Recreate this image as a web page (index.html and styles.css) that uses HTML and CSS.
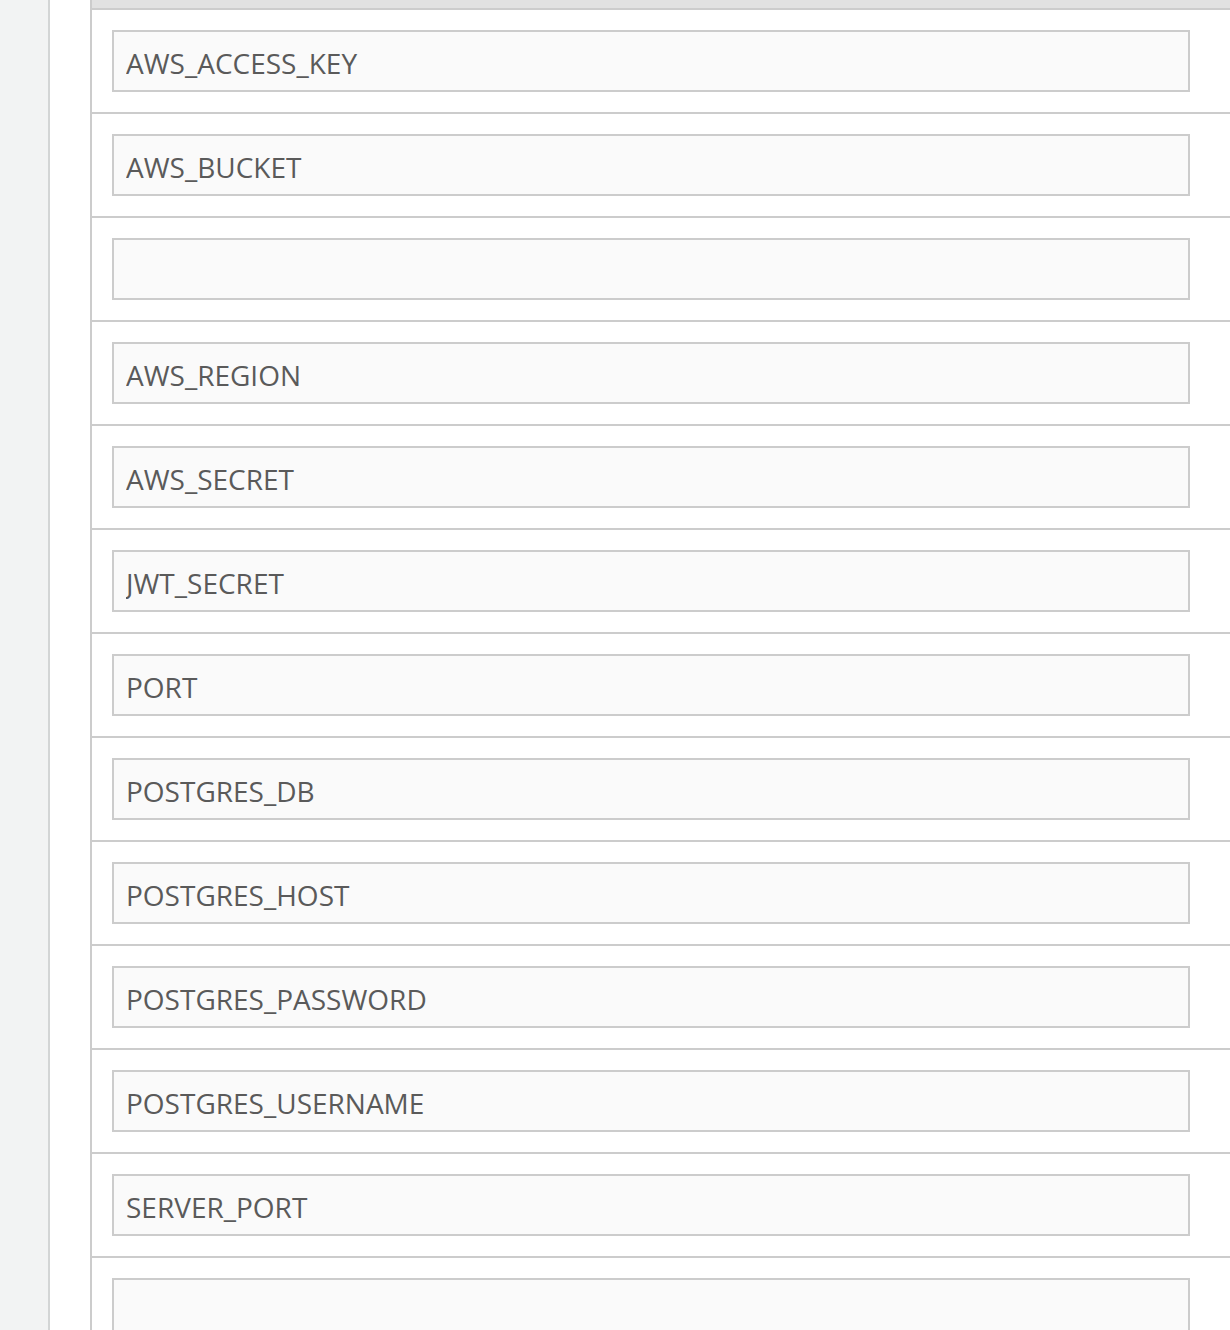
FILE: index.html
```html
<!DOCTYPE html>
<html>
<head>
<meta charset="utf-8">
<link rel="stylesheet" href="styles.css">
</head>
<body>
<div class="page">
  <aside class="sidebar"></aside>
  <div class="gutter"></div>
  <main class="table">
    <div class="table-head"></div>
    <div class="row"><input class="field" type="text" value="AWS_ACCESS_KEY"></div>
    <div class="row"><input class="field" type="text" value="AWS_BUCKET"></div>
    <div class="row"><input class="field" type="text" value=""></div>
    <div class="row"><input class="field" type="text" value="AWS_REGION"></div>
    <div class="row"><input class="field" type="text" value="AWS_SECRET"></div>
    <div class="row"><input class="field" type="text" value="JWT_SECRET"></div>
    <div class="row"><input class="field" type="text" value="PORT"></div>
    <div class="row"><input class="field" type="text" value="POSTGRES_DB"></div>
    <div class="row"><input class="field" type="text" value="POSTGRES_HOST"></div>
    <div class="row"><input class="field" type="text" value="POSTGRES_PASSWORD"></div>
    <div class="row"><input class="field" type="text" value="POSTGRES_USERNAME"></div>
    <div class="row"><input class="field" type="text" value="SERVER_PORT"></div>
    <div class="row"><input class="field" type="text" value=""></div>
  </main>
</div>
</body>
</html>
```
FILE: styles.css
```css
html, body {
  margin: 0;
  padding: 0;
  background: #ffffff;
  overflow: hidden;
}
.page {
  display: flex;
  height: 1330px;
  overflow: hidden;
}
.sidebar {
  width: 48px;
  flex: none;
  background: #f2f3f3;
  border-right: 2px solid #d3d5d5;
}
.gutter {
  width: 40px;
  flex: none;
  background: #ffffff;
}
.table {
  flex: 1;
  border-left: 2px solid #cccccc;
  display: flex;
  flex-direction: column;
}
.table-head {
  height: 8px;
  flex: none;
  background: #e1e1e1;
  border-bottom: 2px solid #cccccc;
}
.row {
  flex: none;
  padding: 20px 40px 20px 20px;
  border-bottom: 2px solid #cccccc;
}
.field {
  display: block;
  box-sizing: border-box;
  width: 100%;
  height: 62px;
  margin: 0;
  padding: 4px 12px 0 12px;
  border: 2px solid #cccccc;
  background: #fafafa;
  color: #5a5a5a;
  font-family: "Open Sans", "Noto Sans", sans-serif;
  font-size: 28px;
  font-weight: 500;
  outline: none;
}
```
